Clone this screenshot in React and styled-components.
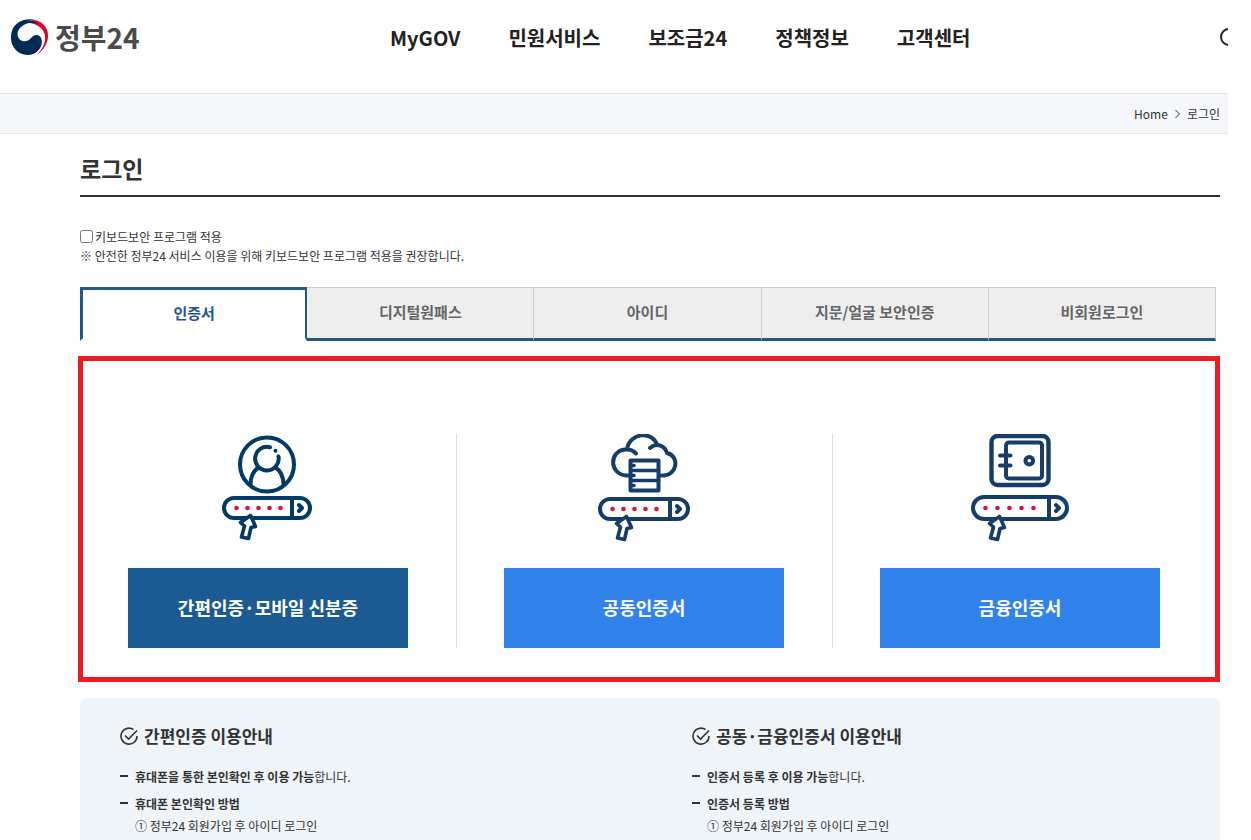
import React from 'react';
import styled, {createGlobalStyle} from 'styled-components';


const GlobalStyle = createGlobalStyle`
    * {
        box-sizing: border-box;
    }
    html, body {
        margin: 0;
        background: #fff;
    }
    body, button, input {
        font-family: 'Noto Sans CJK KR', 'Noto Sans', sans-serif;
        color: #333;
    }
    h1, h2, p, ul, ol {
        margin: 0;
        padding: 0;
        list-style: none;
    }
    a {
        color: inherit;
        text-decoration: none;
    }
    button {
        border: none;
        padding: 0;
        background: none;
        cursor: pointer;
    }
`;

const Page = styled.div`
    height: 100vh;
    margin-right: 23px;
    overflow: hidden;
`;

/* header */

const Header = styled.header`
    display: flex;
    align-items: center;
    height: 93px;
    padding: 0 0 18px 10px;
`;

const Logo = styled.a`
    display: flex;
    align-items: center;
    gap: 6px;
    flex: 0 0 380px;
    height: 36px;
    padding-bottom: 2px;
    font-size: 28px;
    font-weight: 700;
    line-height: 36px;
    color: #4a4a4a;
`;

const Nav = styled.nav`
    display: flex;
    gap: 48px;
    font-size: 20px;
    font-weight: 700;
    line-height: 28px;
    color: #222;
    white-space: nowrap;
`;

const SearchButton = styled.button`
    width: 8px;
    height: 20px;
    margin-left: auto;
    overflow: hidden;

    svg {
        display: block;
    }
`;

const Breadcrumb = styled.nav`
    display: flex;
    align-items: center;
    justify-content: flex-end;
    gap: 7px;
    height: 41px;
    padding-right: 8px;
    font-size: 12px;
    line-height: 20px;
    background: #f5f7fb;
    border-top: 1px solid #e1e4e8;
    border-bottom: 1px solid #e8e8ea;
`;

/* login */

const Main = styled.main`
    padding: 17px 8px 0 80px;
`;

const Title = styled.h1`
    height: 46px;
    font-size: 23px;
    font-weight: 700;
    line-height: 34px;
    border-bottom: 2px solid #333;
`;

const Security = styled.div`
    margin-top: 30px;
    font-size: 12px;
    line-height: 19px;
`;

const CheckLabel = styled.label`
    display: flex;
    align-items: center;
    gap: 2px;
`;

const CheckBox = styled.input`
    width: 13px;
    height: 13px;
    margin: 0;
`;

const Tabs = styled.div`
    display: grid;
    grid-template-columns: repeat(5, 1fr);
    margin: 22px 4px 0 0;
`;

const Tab = styled.button`
    height: 54px;
    padding-bottom: 3px;
    font-size: 15px;
    font-weight: 700;
    color: ${props => props.$active ? '#23578a' : '#666'};
    background: ${props => props.$active ? '#fff' : '#eee'};
    border-style: solid;
    border-color: ${props => props.$active ? '#23578a #23578a #fff' : '#ccc #ccc #23578a'};
    border-width: ${props => props.$active ? '3px 2px 3px 3px' : '1px 1px 3px 0'};
`;

const Methods = styled.section`
    position: relative;
    display: grid;
    grid-template-columns: repeat(3, 1fr);
    margin: 15px 0 0 -2px;
    padding: 78px 12px 34px 2px;

    &::after {
        content: '';
        position: absolute;
        inset: 0;
        border: 5px solid #ed1c24;
        pointer-events: none;
    }
`;

const Method = styled.div`
    display: flex;
    flex-direction: column;
    align-items: center;
    gap: 24px;
    padding: 0 48px;

    & + & {
        padding-left: 47px;
        border-left: 1px solid #ddd;
    }
`;

const MethodButton = styled.button`
    width: 100%;
    height: 80px;
    padding-bottom: 2px;
    font-size: 18px;
    font-weight: 700;
    color: #fff;
    background: ${props => props.$main ? '#1c5a93' : '#3182ea'};
`;

/* guide */

const Guide = styled.section`
    display: grid;
    grid-template-columns: 1fr 1fr;
    gap: 84px;
    margin-top: 16px;
    padding: 24px 40px 40px;
    background: #eff4f9;
    border-radius: 8px;
`;

const GuideTitle = styled.h2`
    display: flex;
    align-items: center;
    gap: 5px;
    margin-bottom: 16px;
    font-size: 17px;
    font-weight: 700;
    line-height: 28px;
`;

const GuideItem = styled.li`
    display: grid;
    grid-template-columns: 8px 1fr;
    column-gap: 7px;
    margin-bottom: 5px;
    font-size: 12px;
    line-height: 22px;

    &::before {
        content: '';
        height: 2px;
        margin-top: 9px;
        background: #333;
    }
`;

function LogoMark(){
    return (
        <svg width="39" height="38" viewBox="30 56 117 114" aria-hidden="true">
            <path fill="#e4032e" d="M72 72C84 60 112 58 129 74C152 94 151 138 110 167C129 147 137 130 135 110C132 84 102 66 72 72Z"/>
            <path fill="#002c54" d="M130 74C98 48 46 58 35 97C25 134 49 167 82 167C110 167 129 144 125 121C123 105 106 103 97 112C87 124 76 128 65 124C50 118 49 98 60 86C75 69 104 66 118 77C108 66 90 62 80 66C97 60 114 63 130 74Z"/>
        </svg>
    )
}

// password bar with the arrow under it, shared by the three icons
function PasswordBar({x = 14, y = 78, width = 86, height = 20, step = 11}){
    const middle = y + height / 2;
    const divider = x + width - 18;

    return (
        <>
            <rect x={x} y={y} width={width} height={height} rx={height / 2}/>
            <path d={`M${divider} ${y}v${height}`}/>
            <path d={`M${divider + 7} ${middle - 3}l3 3l-3 3`} strokeWidth="4"/>
            {[0, 1, 2, 3, 4].map(n => (
                <circle key={n} cx={x + 12.5 + n * step} cy={middle} r="2.3" fill="#d8143c" stroke="none"/>
            ))}
            <path
                fill="#fff"
                strokeWidth="3.6"
                transform={`translate(${x - 14} ${y + height - 98})`}
                d="M40.500 95.500L30.500 102.500L34.500 106L31.500 117L38.500 118.500L41 107.500L45.500 106.500Z"
            />
        </>
    )
}

function MethodIcon({left, color, children}){
    return (
        <svg
            width="120"
            height="110"
            viewBox={`${left} 14 120 110`}
            fill="none"
            stroke={color}
            strokeWidth="4"
            strokeLinecap="round"
            strokeLinejoin="round"
            aria-hidden="true"
        >
            {children}
        </svg>
    )
}

function UserIcon(){
    return (
        <MethodIcon left={-2} color="#003a66">
            <circle cx="57" cy="44.5" r="27"/>
            <path d="M60 27.300A11.800 11.800 0 1 0 68.500 36.500"/>
            <circle cx="65.500" cy="30.800" r="2" fill="#003a66" stroke="none"/>
            <path d="M48.500 47.500C43 51 40.500 56 40.500 65M65.500 47.500C71 51 73.500 56 73.500 65"/>
            <PasswordBar/>
        </MethodIcon>
    )
}

function CloudIcon(){
    return (
        <MethodIcon left={-1} color="#163d68">
            <path d="M45 55.500H41C24 54 24 31 40 29.500C45 29 49 31 51 33.500M42 29C45 12 68 11 72 25M65 28C72 22 80 26 82 33C95 36 92 55 79 55.500H74"/>
            <rect x="45.500" y="40.500" width="28" height="30"/>
            <path d="M45.500 50.500h28M45.500 60.500h28M46 45.500h3M46 55.500h3M46 65.500h3" strokeWidth="3.600"/>
            <PasswordBar x={15} y={79} width={88}/>
        </MethodIcon>
    )
}

function SafeIcon(){
    return (
        <MethodIcon left={0} color="#163d68">
            <rect x="31.500" y="16" width="57" height="49" rx="6" strokeWidth="4.400"/>
            <rect x="46" y="22.500" width="36" height="36" rx="3"/>
            <path d="M40 35.500h10.500M40 45.500h10.500"/>
            <circle cx="69.300" cy="40.700" r="3.800"/>
            <PasswordBar x={13} y={77} width={94} height={22} step={12}/>
        </MethodIcon>
    )
}

function CheckIcon(){
    return (
        <svg width="19" height="19" viewBox="0 0 19 19" fill="none" stroke="#333" strokeWidth="1.600" aria-hidden="true">
            <path d="M13.500 2.500A8 8 0 1 0 17 9"/>
            <path d="M5 8.500l3.500 3.500l8.500-8.500"/>
        </svg>
    )
}

const menu = ['MyGOV', '민원서비스', '보조금24', '정책정보', '고객센터'];

const tabs = ['인증서', '디지털원패스', '아이디', '지문/얼굴 보안인증', '비회원로그인'];

const methods = [
    {name: '간편인증·모바일 신분증', Icon: UserIcon, main: true},
    {name: '공동인증서', Icon: CloudIcon},
    {name: '금융인증서', Icon: SafeIcon},
];

const guides = [
    {title: '간편인증 이용안내', use: '휴대폰을 통한 본인확인 후 이용 가능', how: '휴대폰 본인확인 방법'},
    {title: '공동·금융인증서 이용안내', use: '인증서 등록 후 이용 가능', how: '인증서 등록 방법'},
];

function App(){

    const [active, setActive] = React.useState(0);

    return (
        <Page>
            <GlobalStyle/>
            <Header>
                <Logo href="#"><LogoMark/>정부24</Logo>
                <Nav>
                    {menu.map(item => <a href="#" key={item}>{item}</a>)}
                </Nav>
                <SearchButton aria-label="검색">
                    <svg width="24" height="20" viewBox="0 0 24 20" fill="none" stroke="#222" strokeWidth="2">
                        <circle cx="9" cy="9" r="8"/>
                        <path d="M15 15l6 5"/>
                    </svg>
                </SearchButton>
            </Header>
            <Breadcrumb>
                <a href="#">Home</a>
                <svg width="5" height="10" viewBox="0 0 5 10" fill="none" stroke="#333" aria-hidden="true">
                    <path d="M0.500 1l4 4l-4 4"/>
                </svg>
                <span>로그인</span>
            </Breadcrumb>
            <Main>
                <Title>로그인</Title>
                <Security>
                    <CheckLabel>
                        <CheckBox type="checkbox"/>
                        키보드보안 프로그램 적용
                    </CheckLabel>
                    <p>※ 안전한 정부24 서비스 이용을 위해 키보드보안 프로그램 적용을 권장합니다.</p>
                </Security>
                <Tabs role="tablist">
                    {tabs.map((tab, i) => (
                        <Tab
                            key={tab}
                            role="tab"
                            aria-selected={i === active}
                            $active={i === active}
                            onClick={() => setActive(i)}
                        >
                            {tab}
                        </Tab>
                    ))}
                </Tabs>
                <Methods>
                    {methods.map(({name, Icon, main}) => (
                        <Method key={name}>
                            <Icon/>
                            <MethodButton $main={main}>{name}</MethodButton>
                        </Method>
                    ))}
                </Methods>
                <Guide>
                    {guides.map(guide => (
                        <div key={guide.title}>
                            <GuideTitle><CheckIcon/>{guide.title}</GuideTitle>
                            <ul>
                                <GuideItem>
                                    <p><b>{guide.use}</b>합니다.</p>
                                </GuideItem>
                                <GuideItem>
                                    <div>
                                        <b>{guide.how}</b>
                                        <p>① 정부24 회원가입 후 아이디 로그인</p>
                                    </div>
                                </GuideItem>
                            </ul>
                        </div>
                    ))}
                </Guide>
            </Main>
        </Page>
    )
}

export default App;
